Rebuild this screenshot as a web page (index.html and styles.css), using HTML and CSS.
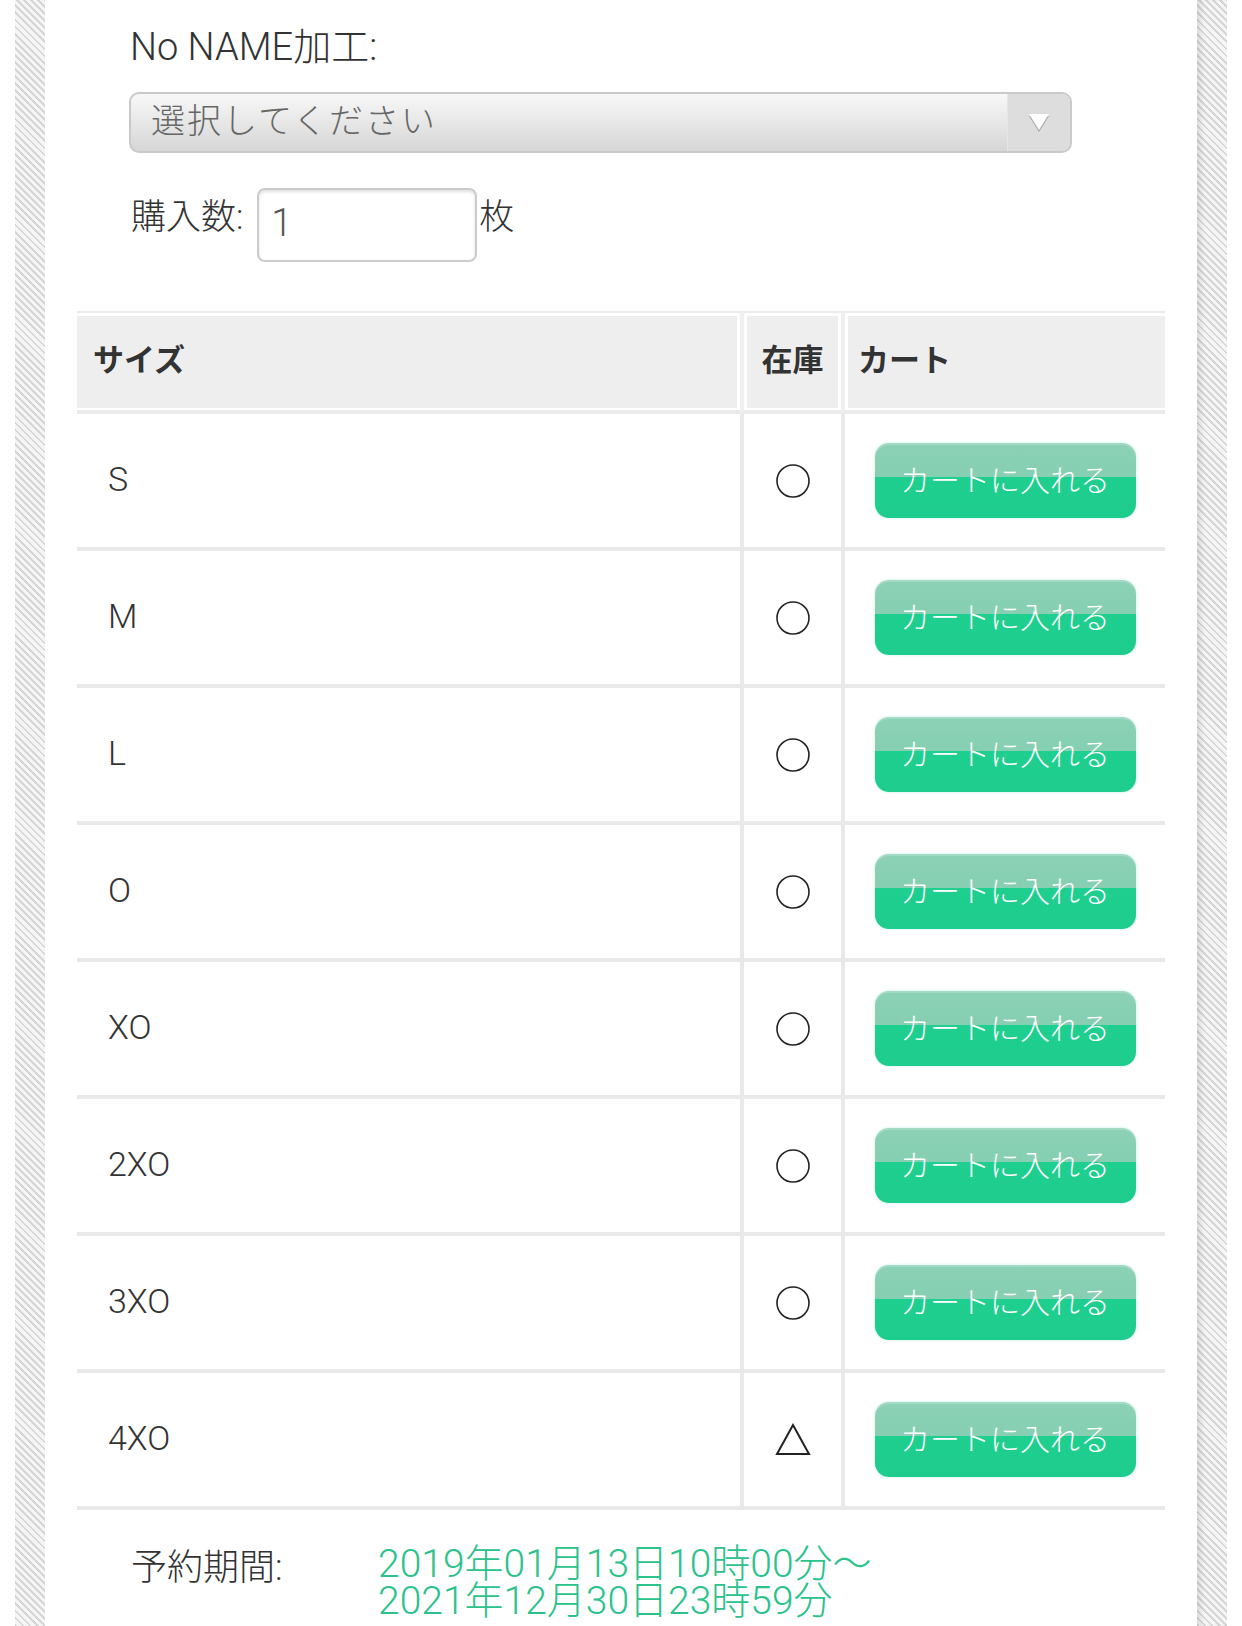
FILE: index.html
```html
<!DOCTYPE html>
<html lang="ja">
<head>
<meta charset="utf-8">
<title>サイズ選択</title>
<link rel="stylesheet" href="styles.css">
</head>
<body>
<div class="page">
  <div class="stripe"></div>
  <main class="content">
    <div class="form">
      <div class="field-label">No NAME加工:</div>
      <div class="select">
        <div class="select-text">選択してください</div>
        <div class="select-arrow">
          <svg width="26" height="24" viewBox="0 0 26 24"><polygon points="3,5 23,5 13,21" fill="#a8a8a8"/><polygon points="3,3 23,3 13,19" fill="#ffffff"/></svg>
        </div>
      </div>
      <div class="qty-row">
        <span class="qty-label">購入数:</span>
        <div class="qty-input">1</div>
        <span class="qty-unit">枚</span>
      </div>
    </div>

    <table class="stock">
      <thead>
        <tr>
          <th class="c1"><div class="th-in th-left">サイズ</div></th>
          <th class="c2"><div class="th-in th-center">在庫</div></th>
          <th class="c3"><div class="th-in th-cart">カート</div></th>
        </tr>
      </thead>
      <tbody>
        <tr><td class="c1"><div class="td-in size">S</div></td><td class="c2"><div class="td-in mid"><svg class="sym" width="36" height="36" viewBox="0 0 36 36"><circle cx="18" cy="18" r="16" fill="none" stroke="#222" stroke-width="1.6"/></svg></div></td><td class="c3"><div class="td-in mid"><div class="cart-btn">カートに入れる</div></div></td></tr>
        <tr><td class="c1"><div class="td-in size">M</div></td><td class="c2"><div class="td-in mid"><svg class="sym" width="36" height="36" viewBox="0 0 36 36"><circle cx="18" cy="18" r="16" fill="none" stroke="#222" stroke-width="1.6"/></svg></div></td><td class="c3"><div class="td-in mid"><div class="cart-btn">カートに入れる</div></div></td></tr>
        <tr><td class="c1"><div class="td-in size">L</div></td><td class="c2"><div class="td-in mid"><svg class="sym" width="36" height="36" viewBox="0 0 36 36"><circle cx="18" cy="18" r="16" fill="none" stroke="#222" stroke-width="1.6"/></svg></div></td><td class="c3"><div class="td-in mid"><div class="cart-btn">カートに入れる</div></div></td></tr>
        <tr><td class="c1"><div class="td-in size">O</div></td><td class="c2"><div class="td-in mid"><svg class="sym" width="36" height="36" viewBox="0 0 36 36"><circle cx="18" cy="18" r="16" fill="none" stroke="#222" stroke-width="1.6"/></svg></div></td><td class="c3"><div class="td-in mid"><div class="cart-btn">カートに入れる</div></div></td></tr>
        <tr><td class="c1"><div class="td-in size">XO</div></td><td class="c2"><div class="td-in mid"><svg class="sym" width="36" height="36" viewBox="0 0 36 36"><circle cx="18" cy="18" r="16" fill="none" stroke="#222" stroke-width="1.6"/></svg></div></td><td class="c3"><div class="td-in mid"><div class="cart-btn">カートに入れる</div></div></td></tr>
        <tr><td class="c1"><div class="td-in size">2XO</div></td><td class="c2"><div class="td-in mid"><svg class="sym" width="36" height="36" viewBox="0 0 36 36"><circle cx="18" cy="18" r="16" fill="none" stroke="#222" stroke-width="1.6"/></svg></div></td><td class="c3"><div class="td-in mid"><div class="cart-btn">カートに入れる</div></div></td></tr>
        <tr><td class="c1"><div class="td-in size">3XO</div></td><td class="c2"><div class="td-in mid"><svg class="sym" width="36" height="36" viewBox="0 0 36 36"><circle cx="18" cy="18" r="16" fill="none" stroke="#222" stroke-width="1.6"/></svg></div></td><td class="c3"><div class="td-in mid"><div class="cart-btn">カートに入れる</div></div></td></tr>
        <tr><td class="c1"><div class="td-in size">4XO</div></td><td class="c2"><div class="td-in mid"><svg class="sym" width="36" height="33" viewBox="0 0 36 33"><polygon points="18,2 34,31 2,31" fill="none" stroke="#222" stroke-width="2"/></svg></div></td><td class="c3"><div class="td-in mid"><div class="cart-btn">カートに入れる</div></div></td></tr>
      </tbody>
    </table>

    <div class="period">
      <div class="period-label">予約期間:</div>
      <div class="period-dates">2019年01月13日10時00分～<br>2021年12月30日23時59分</div>
    </div>
  </main>
  <div class="stripe stripe-right"></div>
</div>
</body>
</html>
```

FILE: styles.css
```css
html, body {
  margin: 0;
  padding: 0;
  height: 100%;
  overflow: hidden;
  background: #ffffff;
}

body {
  font-family: Roboto, "Noto Sans CJK JP", sans-serif;
  font-weight: 300;
  color: #333333;
}

.page {
  display: flex;
  height: 1626px;
  padding: 0 15px;
}

.stripe {
  flex: none;
  width: 30px;
  background: repeating-linear-gradient(45deg, #d6d6d6 0 2px, #f5f5f5 2px 5px);
}

.stripe-right {
  box-shadow: inset 6px 0 6px -3px rgba(0, 0, 0, 0.12);
}

.content {
  flex: 1;
  padding: 0 32px;
}

.form {
  padding-left: 52px;
}

.field-label {
  margin-top: 22px;
  font-size: 38px;
  line-height: 50px;
  padding-left: 1px;
}

.select {
  margin-top: 20px;
  width: 943px;
  height: 61px;
  box-sizing: border-box;
  border: 2px solid #c9c9c9;
  border-radius: 10px;
  background: linear-gradient(#f8f8f8, #d6d6d6);
  display: flex;
  overflow: hidden;
}

.select-text {
  flex: 1;
  padding-left: 20px;
  font-size: 34px;
  line-height: 55px;
  color: #666666;
  letter-spacing: 2px;
}

.select-arrow {
  width: 62px;
  border-left: 1px solid #e6e6e6;
  background: #dddddd;
  display: flex;
  align-items: center;
  justify-content: center;
}

.qty-row {
  margin-top: 35px;
  display: flex;
  align-items: center;
}

.qty-label {
  font-size: 35px;
  line-height: 40px;
  margin-right: 14px;
  margin-bottom: 14px;
  padding-left: 2px;
}

.qty-input {
  width: 220px;
  height: 74px;
  box-sizing: border-box;
  border: 2px solid #cccccc;
  border-radius: 8px;
  box-shadow: inset 0 2px 3px rgba(0, 0, 0, 0.12);
  padding-left: 12px;
  font-size: 38px;
  line-height: 66px;
  color: #555555;
}

.qty-unit {
  font-size: 35px;
  line-height: 40px;
  margin-left: 2px;
  margin-bottom: 14px;
}

.stock {
  margin-top: 49px;
  width: 1088px;
  table-layout: fixed;
  border-collapse: separate;
  border-spacing: 0;
}

.stock th {
  box-sizing: border-box;
  background: #eeeeee;
  background-clip: content-box;
  border-top: 2px solid #ececec;
  border-bottom: 4px solid #ebebeb;
  padding: 3px 0 2px 0;
  font-size: 31px;
  font-weight: bold;
  color: #333333;
  text-align: left;
}

.stock th.c1 {
  width: 663px;
  padding-right: 3px;
}

.stock th.c2 {
  width: 101px;
  border-left: 4px solid #f0f0f0;
  padding-left: 3px;
  padding-right: 3px;
}

.stock th.c3 {
  width: 324px;
  border-left: 4px solid #f0f0f0;
  padding-left: 3px;
}

.th-in {
  height: 82px;
  padding-bottom: 10px;
  display: flex;
  align-items: center;
}

.th-left {
  padding-left: 16px;
}

.th-center {
  justify-content: center;
}

.th-cart {
  padding-left: 10px;
}

.stock td {
  box-sizing: border-box;
  padding: 0;
  border-bottom: 4px solid #e9e9e9;
}

.stock td.c2,
.stock td.c3 {
  border-left: 4px solid #e9e9e9;
}

.td-in {
  height: 133px;
  display: flex;
  align-items: center;
}

.size {
  padding-left: 31px;
  font-size: 34px;
  color: #333333;
  padding-bottom: 4px;
  box-sizing: border-box;
}

.mid {
  justify-content: center;
}

.cart-btn {
  width: 261px;
  height: 75px;
  border-radius: 14px;
  background: linear-gradient(#8bd1b6 0, #86cfb2 46%, #1fcf8f 46%, #1ecd8d 100%);
  box-shadow: 0 0 3px rgba(0, 190, 170, 0.25), inset 0 2px 0 rgba(255, 255, 255, 0.2);
  color: #ffffff;
  font-size: 30px;
  display: flex;
  align-items: center;
  justify-content: center;
  padding-bottom: 5px;
  box-sizing: border-box;
}

.period {
  margin-top: 36px;
  padding-left: 54px;
  display: flex;
}

.period-label {
  width: 247px;
  flex: none;
  font-size: 36px;
  line-height: 38px;
  padding-top: 3px;
}

.period-dates {
  font-size: 39px;
  line-height: 37px;
  color: #2bc28c;
}
```
